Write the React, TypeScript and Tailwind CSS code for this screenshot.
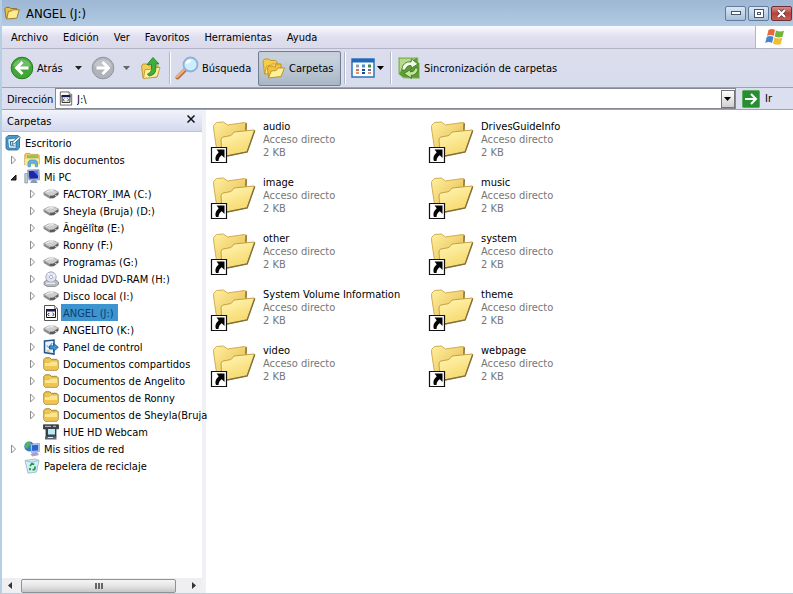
import type { ReactNode } from "react";

type IconProps = { className?: string };

function FolderIcon({ className = "h-4 w-4" }: IconProps) {
  return (
    <svg className={className} viewBox="0 0 16 16" aria-hidden="true">
      <path d="M.8 12.500V3.500L2.500 1.800h4.300L8.300 3.300h5.400l1.500 1.500v7.900l-1.200 1.500H2.200z" fill="#f0c64c" stroke="#9c7a25" strokeWidth=".9" />
      <path d="M1.700 5.800h4.500l1.500-1.300h5.500l1.200 1.200v7.500H1.700z" fill="#fce68c" />
      <path d="M1.700 10h12.700v3.200H1.700z" fill="#f0c44e" />
      <path d="M1.500 6.300h5l1.400-1.400h6" fill="none" stroke="#c79f3d" strokeWidth=".7" />
    </svg>
  );
}

function OpenFolderIcon({ className = "h-5 w-5" }: IconProps) {
  return (
    <svg className={className} viewBox="0 0 20 18" aria-hidden="true">
      <path d="M2.500 15.500 1 4l1.500-2h4.700L8.500 3.500H16V7l-3 9z" fill="#eebf45" stroke="#806021" strokeWidth="1" />
      <path d="m3.500 16.500 2-9.500 4-.5L11 5h8l-3 10.500z" fill="#fdeb90" stroke="#8d6b20" strokeWidth="1" />
    </svg>
  );
}

function FoldersIcon() {
  return (
    <svg className="h-6 w-6" viewBox="0 0 24 24" aria-hidden="true">
      <path d="M2.500 18 1 5l1.500-2H7l1.500 1.500h5L15 6v9z" fill="#f6cd48" stroke="#c09128" strokeWidth=".9" />
      <path d="m2.800 18 1.700-8 3.500-.5L9.500 8H16l-2 9z" fill="#fde67c" stroke="#c09128" strokeWidth=".8" />
      <path d="M6.500 21.500 5.500 12 7 10h4.500L13 11.500l1-3.500h5v4l-2 8z" fill="#f3c23e" stroke="#b98a22" strokeWidth=".9" />
      <path d="m6.500 22 2.700-7 5-.5 1.800-2.500h6.500L19 20.500z" fill="#fff09a" stroke="#b98a22" strokeWidth=".9" />
    </svg>
  );
}

function ShortcutFolderIcon() {
  return (
    <svg className="h-12 w-12 shrink-0" viewBox="0 0 48 48" aria-hidden="true">
      <defs>
        <linearGradient id="folderBack" x1="0" y1="0" x2="1" y2="1">
          <stop offset="0" stopColor="#fff0a0" />
          <stop offset="1" stopColor="#e3b544" />
        </linearGradient>
        <linearGradient id="folderFront" x1="0" y1="0" x2=".5" y2="1">
          <stop offset="0" stopColor="#fff8ba" />
          <stop offset="1" stopColor="#f7d86c" />
        </linearGradient>
      </defs>
      <path d="M7 36 3.500 12q-.3-3 1.500-4l1.500-1.500 7-.5 4 3 17-2.500q1.500 0 1.500 1.500l-1 26-20 4z" fill="url(#folderBack)" stroke="#d3ad50" strokeWidth="1" />
      <path d="m35.500 6.500 1.500 1-.3 8.500H35z" fill="#8f7a44" />
      <path d="m12 39-1-15q0-2.500 2-3l8-1.500 3-3.500L44 14q1 0 .5 1.500L37 36 17 40z" fill="url(#folderFront)" stroke="#c8a040" strokeWidth="1" />
      <path d="M44.700 14.500 37.200 36 17 40" fill="none" stroke="#80703e" strokeWidth="1.400" />
      <path d="M1.500 31.500h15v15h-15z" fill="#fff" stroke="#111" strokeWidth="1.200" />
      <path d="M6.500 33.500h8V42l-2.700-2.700Q8.800 41 8.500 45H6q-2-4 2.700-8.700z" fill="#050505" />
    </svg>
  );
}

function DriveIcon() {
  return (
    <svg className="h-4 w-4" viewBox="0 0 16 16" aria-hidden="true">
      <path d="m.5 6.500 5-2.500h6l4 2-5 3.500-4 .5z" fill="#cdcdcd" stroke="#969696" strokeWidth=".6" />
      <path d="m.5 6.500 6 3.500v2.500L.7 9z" fill="#8b8b8b" />
      <path d="m6.500 10 4.100-.5 4.900-3.500v2.700l-4.700 3.600-4.300.2z" fill="#5c5c5c" />
      <path d="m3.500 6 3-1.200h4" stroke="#f8f8f8" fill="none" />
      <path d="M12 9.600h1.600" stroke="#d7e4d0" />
    </svg>
  );
}

function DvdIcon() {
  return (
    <svg className="h-4 w-4" viewBox="0 0 16 16" aria-hidden="true">
      <path d="m1 11 3-2h9l2.500 2v2.500L12 15.500H4L1 13.500z" fill="#b9bbc0" stroke="#74767c" strokeWidth=".7" />
      <circle cx="8" cy="6" r="5.200" fill="#dfe4f2" stroke="#8a90a3" strokeWidth=".7" />
      <path d="M8 6 5 2M8 6l4.500-2" stroke="#fff" />
      <circle cx="8" cy="6" r="1.600" fill="#fff" stroke="#8c8fb0" strokeWidth=".7" />
      <path d="M3 12.200h9" stroke="#fff" />
    </svg>
  );
}

function ProgramIcon({ className = "h-4 w-4" }: IconProps) {
  return (
    <svg className={className} viewBox="0 0 16 16" aria-hidden="true">
      <path d="M1.500.5h10l3 3v12h-13z" fill="#fff" stroke="#555" />
      <path d="M11.500.5v3h3" fill="#ddd" stroke="#555" strokeWidth=".7" />
      <path d="M3.500 4.500h9v8h-9z" fill="#f4f4f4" stroke="#111" />
      <path d="M3 4h10v2.500H3z" fill="#171b52" />
      <path d="m6.200 8-1.400 1.400L6.200 11M9.600 8 11 9.400 9.600 11" fill="none" stroke="#222" />
    </svg>
  );
}

function DesktopIcon() {
  return (
    <svg className="h-4 w-4" viewBox="0 0 16 16" aria-hidden="true">
      <path d="m1 2.500 2-2h10l1.500 1.500v10.500l-2 2.500H3L1 13.500z" fill="#4a9bca" stroke="#1f6292" strokeWidth=".8" />
      <path d="M2.800 4 11 3v10.500l-7.500-.6z" fill="#e4f4fc" stroke="#1f6292" strokeWidth=".7" />
      <path d="M5.500 10.500v-4h4M5.500 10.500l4 .3" fill="none" stroke="#2a7fb5" strokeWidth="1.200" />
      <path d="m7 9.500 1-3 6-5 1.500 1.300L9.500 8.500z" fill="#fff" stroke="#255f87" strokeWidth=".8" />
    </svg>
  );
}

function MyDocumentsIcon() {
  return (
    <svg className="h-4 w-4" viewBox="0 0 16 16" aria-hidden="true">
      <path d="M.8 13V2.500L2 1.400h4l1 1h7.200l1 1V12z" fill="#f0ce66" stroke="#b79a48" strokeWidth=".8" />
      <path d="M3 3.200h11v3.400H3z" fill="#96bf55" />
      <path d="M1 6.500h14v6.800H1z" fill="#fbe99a" />
      <path d="M4 14.800V10l2-2h5.500l2 2v4.800h-2.200v-3.600H6.400v3.600z" fill="#65b5e3" stroke="#3785b7" strokeWidth=".6" />
    </svg>
  );
}

function ComputerIcon() {
  return (
    <svg className="h-4 w-4" viewBox="0 0 16 16" aria-hidden="true">
      <path d="M.8 4.500h2.700v9.500H.8z" fill="#c2cbd6" stroke="#8390a5" strokeWidth=".7" />
      <path d="M3.500 1 15 .800l.5 10L5 11z" fill="#b9c8de" stroke="#75849d" strokeWidth=".7" />
      <path d="m4.700 2 9.300-.2.2 7.700-8.800.3z" fill="#1c29a8" />
      <path d="m9.500 2 4.500-.2.2 5.500z" fill="#587cf0" />
      <path d="M8 11h4l1.800 3H6z" fill="#8d9bb2" />
    </svg>
  );
}

function ControlPanelIcon() {
  return (
    <svg className="h-4 w-4" viewBox="0 0 16 16" aria-hidden="true">
      <path d="M1.500 2 11 1v14l-9.500-1.500z" fill="#e7f2fc" stroke="#23578e" strokeWidth="1.500" />
      <path d="m4 6.500 1.700 2L9 4.200" fill="none" stroke="#3a78b4" />
      <path d="M6.500 10V7l4-.3V4.300L15.300 8.300l-4.800 4.200V10z" fill="#3e91d3" stroke="#194e86" strokeWidth=".8" />
      <path d="M3.500 12h3" stroke="#e09a3a" />
    </svg>
  );
}

function WebcamIcon() {
  return (
    <svg className="h-4 w-4" viewBox="0 0 16 16" aria-hidden="true">
      <path d="M.5.800h15v4H13V13H3V5H.5z" fill="#3e434b" stroke="#23272d" strokeWidth=".7" />
      <path d="M5 5h7v5.500H5z" fill="#b9eaf4" />
      <path d="M2 2.300h6M10 2.300h3" stroke="#c5ced9" />
      <path d="M2 12.500h11.500v3H2z" fill="#5b6879" />
      <path d="M5 13.500h5" stroke="#dce4ee" />
    </svg>
  );
}

function NetworkIcon() {
  return (
    <svg className="h-4 w-4" viewBox="0 0 16 16" aria-hidden="true">
      <circle cx="5.300" cy="5.500" r="5" fill="#2c80c9" />
      <path d="M2 2q3-2.500 5 0L5 5 3 8 .6 6z" fill="#52b45e" />
      <path d="m6.500 3.200 8.800-.7v8l-8 .8z" fill="#c8dcf5" stroke="#6786b7" strokeWidth=".7" />
      <path d="m7.700 4.300 6.500-.6v5.700l-6 .6z" fill="#2b63d4" />
      <path d="m9 11.500 4-.5 2 3-6.500 1.500-2-2z" fill="#a89fce" />
    </svg>
  );
}

function RecycleBinIcon() {
  return (
    <svg className="h-4 w-4" viewBox="0 0 16 16" aria-hidden="true">
      <path d="M1 2.500 11 1l4 1.500L12.500 14 4 15.200z" fill="#d5eef5" stroke="#86b8c8" strokeWidth=".8" />
      <path d="m1 2.500 6 1.700L15 2.500" fill="none" stroke="#9ac3cf" />
      <path d="M6 8 8 5.500l2.200 1M11.300 8.400l-.8 3-2 .4M5.700 10l.5 2.300" fill="none" stroke="#1f9a43" strokeWidth="1.800" />
    </svg>
  );
}

function RoundArrow({ back = false }: { back?: boolean }) {
  const fill = back ? "#43a638" : "#b1b3bb";
  const edge = back ? "#247d21" : "#9295a0";
  return (
    <svg className="h-6 w-6" viewBox="0 0 24 24" aria-hidden="true">
      <circle cx="12" cy="12" r="10.800" fill={fill} stroke={edge} />
      <path d="M3 10a9.200 8.600 0 0 1 18 0Q12 14 3 10z" fill="#fff" opacity=".24" />
      <path
        d={back ? "M18.500 12H7M12.500 6 6.500 12l6 6" : "M5.500 12H17M11.500 6l6 6-6 6"}
        fill="none" stroke="#fff" strokeWidth="2.800"
      />
    </svg>
  );
}

function UpFolderIcon() {
  return (
    <svg className="h-6 w-6" viewBox="0 0 24 24" aria-hidden="true">
      <path d="M4 22 2.500 10l1.500-2h4l2 2h9l1 2-2 9z" fill="#f4cf55" stroke="#c09a3a" />
      <path d="m4.500 22.500 1.500-9h5l2-2h8l-3 9.500z" fill="#fff09a" stroke="#b98f2e" strokeWidth=".8" />
      <path d="M8.500 18q4-1 4-5V8.500H8L14 1.500l6 6.500h-3.200v5q0 6-6.800 7z" fill="#3daf3b" stroke="#1d7b25" strokeWidth=".8" />
    </svg>
  );
}

function SearchIcon() {
  return (
    <svg className="h-6 w-6" viewBox="0 0 24 24" aria-hidden="true">
      <path d="m10 14-7.500 7.500" stroke="#b5734c" strokeWidth="4" strokeLinecap="round" />
      <path d="m9.500 13.500-7.500 7.500" stroke="#f1b581" strokeWidth="1.800" strokeLinecap="round" />
      <circle cx="15.500" cy="8.500" r="7" fill="#cfecfb" stroke="#8bb2d8" strokeWidth="1.800" />
      <path d="M10.500 8a5 5 0 0 1 6-4.500q-1 4-6 4.500z" fill="#fff" />
    </svg>
  );
}

function ViewsIcon() {
  return (
    <svg className="h-5 w-6" viewBox="0 0 24 20" aria-hidden="true">
      <path d="M1 1h22v18H1z" fill="#fff" stroke="#2b73bb" strokeWidth="1.500" />
      <path d="M1 1h22v3.500H1z" fill="#2369b9" />
      <path d="M5 6.500h3v3H5z" fill="#8fa2b5" />
      <path d="M11 6.500h3v3h-3z" fill="#4a8ec4" />
      <path d="M17 6.500h3v3h-3z" fill="#3f8a55" />
      <path d="M5 11h3v2H5z" fill="#cc6f52" />
      <path d="M11 11h3v2h-3zM11 14h3v2h-3z" fill="#17489a" />
      <path d="M17 11h3v2h-3z" fill="#5a6fa0" />
      <path d="M5 14h3v2H5zM17 14h3v2h-3z" fill="#dc9573" />
    </svg>
  );
}

function SyncIcon() {
  return (
    <svg className="h-6 w-6" viewBox="0 0 24 24" aria-hidden="true">
      <path d="M1.500 1.500H21V6l1.500 1.500v15l-16-.5-5-4z" fill="#5f9e35" stroke="#a9c79a" />
      <path d="M2.500 2.500H19L7 8.500l-4.500 9z" fill="#b7d98c" />
      <path d="M5 14a7.500 7.500 0 0 1 9-8l.5-3L21 8l-6.500 4-.5-2.500q-5 0-5.500 4.500z" fill="#f4fbe8" stroke="#3c7b23" strokeWidth=".9" />
      <path d="M21 12a7 7 0 0 1-7 7.500l.5 3L7 17.500l6.500-4v2.500q4 0 4.500-4z" fill="#c4e2a0" stroke="#3c7b23" strokeWidth=".9" />
    </svg>
  );
}

function WindowsFlag() {
  return (
    <svg className="h-5 w-5" viewBox="0 0 20 20" aria-hidden="true">
      <path d="M3.500 3q3-2.200 6.500 0L8.700 9Q5.500 7 2 9z" fill="#e6683b" />
      <path d="M11 3.500q4 1.800 8 .2L17.500 9.700q-4 1.700-7.800-.2z" fill="#73b441" />
      <path d="M1.700 10q3.500-2 6.800 0L7 16q-3.200-2-6.800 0z" fill="#4783d2" />
      <path d="M9.500 10.500q4 1.700 7.800.200L15.800 17q-4 1.600-7.800-.500z" fill="#f3bd32" />
    </svg>
  );
}

function Caret({ className = "" }: IconProps) {
  return (
    <svg className={`h-1 w-2 ${className}`} viewBox="0 0 8 4" aria-hidden="true">
      <path d="M0 0h7L3.500 4z" fill="currentColor" />
    </svg>
  );
}

type Node = { name: string; icon: ReactNode; level: 0 | 1 | 2; state?: "open" | "closed"; selected?: boolean };

const drive = <DriveIcon />;
const folder = <FolderIcon />;

const nodes: Node[] = [
  { name: "Escritorio", icon: <DesktopIcon />, level: 0 },
  { name: "Mis documentos", icon: <MyDocumentsIcon />, level: 1, state: "closed" },
  { name: "Mi PC", icon: <ComputerIcon />, level: 1, state: "open" },
  { name: "FACTORY_IMA (C:)", icon: drive, level: 2, state: "closed" },
  { name: "Sheyla (Bruja) (D:)", icon: drive, level: 2, state: "closed" },
  { name: "Ãngëlîtø (E:)", icon: drive, level: 2, state: "closed" },
  { name: "Ronny (F:)", icon: drive, level: 2, state: "closed" },
  { name: "Programas (G:)", icon: drive, level: 2, state: "closed" },
  { name: "Unidad DVD-RAM (H:)", icon: <DvdIcon />, level: 2, state: "closed" },
  { name: "Disco local (I:)", icon: drive, level: 2, state: "closed" },
  { name: "ANGEL (J:)", icon: <ProgramIcon />, level: 2, selected: true },
  { name: "ANGELITO (K:)", icon: drive, level: 2, state: "closed" },
  { name: "Panel de control", icon: <ControlPanelIcon />, level: 2, state: "closed" },
  { name: "Documentos compartidos", icon: folder, level: 2, state: "closed" },
  { name: "Documentos de Angelito", icon: folder, level: 2, state: "closed" },
  { name: "Documentos de Ronny", icon: folder, level: 2, state: "closed" },
  { name: "Documentos de Sheyla(Bruja", icon: folder, level: 2, state: "closed" },
  { name: "HUE HD Webcam", icon: <WebcamIcon />, level: 2 },
  { name: "Mis sitios de red", icon: <NetworkIcon />, level: 1, state: "closed" },
  { name: "Papelera de reciclaje", icon: <RecycleBinIcon />, level: 1 },
];

const indent = ["pl-[3px]", "pl-[6px]", "pl-[25px]"];

function TreeRow({ node }: { node: Node }) {
  return (
    <li
      role="treeitem"
      aria-level={node.level + 1}
      aria-selected={!!node.selected}
      className={`flex h-[17px] items-center whitespace-nowrap ${indent[node.level]}`}
    >
      {node.level > 0 && (
        <span className="flex w-4 shrink-0 items-center">
          {node.state && (
            <button type="button" aria-label={`${node.state === "open" ? "Contraer" : "Expandir"} ${node.name}`}>
              <svg className="h-[10px] w-[10px]" viewBox="0 0 10 10" aria-hidden="true">
                {node.state === "open" ? (
                  <path d="M8 3v5H3z" fill="#333" stroke="#111" />
                ) : (
                  <path d="M3.500 1v8l4-4z" fill="#fff" stroke="#8c8c8c" />
                )}
              </svg>
            </button>
          )}
        </span>
      )}
      <span className="shrink-0">{node.icon}</span>
      <button
        type="button"
        className={`ml-[2px] h-[17px] px-[2px] pt-[2px] ${node.selected ? "bg-[#3d94cf] pr-1 text-[#0b3f70]" : ""}`}
      >
        {node.name}
      </button>
    </li>
  );
}

const files = [
  "audio", "DrivesGuideInfo", "image", "music", "other", "system",
  "System Volume Information", "theme", "video", "webpage",
];

const menus = ["Archivo", "Edición", "Ver", "Favoritos", "Herramientas", "Ayuda"];

function Divider() {
  return <div className="h-8 w-[2px] shrink-0 border-l border-[#b3b6c9] bg-white" />;
}

export default function App() {
  return (
    <div className="flex h-screen flex-col overflow-hidden border-b border-l-2 border-[#b5cfe3] bg-white font-['Tahoma','DejaVu_Sans_Condensed','DejaVu_Sans',sans-serif] text-[11px] leading-[13px] text-black">
      <header className="flex h-[26px] shrink-0 items-center bg-linear-to-b from-[#9db7d4] to-[#b2cae3] pl-[2px]">
        <OpenFolderIcon className="h-4 w-4" />
        <h1 className="ml-[6px] flex-1 text-[13px]">ANGEL (J:)</h1>
        <div className="flex gap-[2px] pr-px">
          <button type="button" aria-label="Minimizar" className="flex h-[15px] w-[21px] items-center justify-center rounded-xs border border-[#637b98] bg-linear-to-b from-[#dce8f3] to-[#a8c0d9]">
            <span className="h-1 w-[10px] border border-[#46566c] bg-white" />
          </button>
          <button type="button" aria-label="Maximizar" className="flex h-[15px] w-[21px] items-center justify-center rounded-xs border border-[#637b98] bg-linear-to-b from-[#dce8f3] to-[#a8c0d9]">
            <span className="flex h-[9px] w-[10px] items-center justify-center border border-[#46566c] bg-white">
              <span className="h-[3px] w-1 border border-[#46566c]" />
            </span>
          </button>
          <button type="button" aria-label="Cerrar" className="flex h-[15px] w-[21px] items-center justify-center rounded-xs border border-[#69303a] bg-linear-to-b from-[#d98c87] via-[#b84138] to-[#c65d50]">
            <svg className="h-[9px] w-[11px]" viewBox="0 0 11 9" aria-hidden="true">
              <path d="m2 1 7 7M9 1 2 8" stroke="#61333a" strokeWidth="3.600" />
              <path d="m2 1 7 7M9 1 2 8" stroke="#fff" strokeWidth="2.200" />
            </svg>
          </button>
        </div>
      </header>

      <nav className="flex h-[23px] shrink-0 border-b border-[#b4b5c9] bg-linear-to-b from-[#fafaff] via-[#dfdff0] to-[#dadaeb]" aria-label="Menú">
        <div className="flex flex-1 items-center gap-[15px] pl-[9px]">
          {menus.map((menu) => (
            <button key={menu} type="button">{menu}</button>
          ))}
        </div>
        <div className="flex w-[38px] items-center justify-center border-l border-[#b4b5c9] bg-white">
          <WindowsFlag />
        </div>
      </nav>

      <div className="flex h-[39px] shrink-0 items-center border-b border-[#9ea1ae] bg-linear-to-b from-[#dcddec] to-[#d7dced] pl-2" role="toolbar" aria-label="Botones estándar">
        <button type="button" className="flex w-[58px] shrink-0 items-center gap-[3px]"><RoundArrow back />Atrás</button>
        <button type="button" aria-label="Historial de atrás" className="flex w-[22px] shrink-0 justify-center"><Caret className="text-[#222]" /></button>
        <button type="button" aria-label="Adelante" className="ml-px shrink-0"><RoundArrow /></button>
        <button type="button" aria-label="Historial de adelante" className="flex w-6 shrink-0 justify-center"><Caret className="text-[#666]" /></button>
        <button type="button" aria-label="Arriba" className="mr-[6px] shrink-0"><UpFolderIcon /></button>
        <Divider />
        <button type="button" className="ml-1 flex w-[83px] shrink-0 items-center gap-[3px]"><SearchIcon />Búsqueda</button>
        <button type="button" aria-pressed="true" className="flex h-[35px] w-[83px] shrink-0 items-center gap-[3px] rounded-xs border border-[#717f90] bg-linear-to-b from-[#ced7e1] via-[#bcc8d4] to-[#a9b7c6] pl-[3px] shadow-inner">
          <FoldersIcon />Carpetas
        </button>
        <div className="ml-[3px]"><Divider /></div>
        <button type="button" aria-label="Vistas" className="ml-[5px] mr-[5px] flex shrink-0 items-center gap-[2px]"><ViewsIcon /><Caret /></button>
        <Divider />
        <button type="button" className="ml-[5px] flex shrink-0 items-center gap-[3px]"><SyncIcon />Sincronización de carpetas</button>
      </div>

      <form className="flex h-[22px] shrink-0 items-center border-b border-[#9ea1ae] bg-[#dcdfef]" onSubmit={(event) => event.preventDefault()}>
        <label htmlFor="address" className="w-[53px] shrink-0 pl-[5px] pt-[2px]">Dirección</label>
        <div className="flex h-[21px] flex-1 items-center border border-[#868993] bg-white pl-[3px]">
          <ProgramIcon className="h-[15px] w-[14px]" />
          <input id="address" defaultValue="J:\" className="ml-1 min-w-0 flex-1 pt-[2px] outline-none" />
          <button type="button" aria-label="Mostrar direcciones" className="flex h-[18px] w-[14px] items-center justify-center border border-[#777] bg-linear-to-b from-white to-[#d0d0d0]"><Caret /></button>
        </div>
        <button type="submit" className="ml-[6px] flex w-[51px] items-center gap-[5px]">
          <svg className="h-[18px] w-[18px]" viewBox="0 0 18 18" aria-hidden="true">
            <rect x=".5" y=".5" width="17" height="17" rx="1" fill="#278e34" stroke="#5aac5c" />
            <path d="M3 9h11M9 4l5 5-5 5" stroke="#fff" strokeWidth="2" fill="none" />
          </svg>
          Ir
        </button>
      </form>

      <div className="flex min-h-0 flex-1">
        <aside className="relative z-10 flex w-[200px] shrink-0 flex-col">
          <div className="flex h-[22px] shrink-0 items-center justify-between border-b border-[#bdc3d8] bg-linear-to-b from-[#f1f3fb] to-[#d4d9ee] pl-[5px] pr-[7px]">
            <h2 className="pt-[2px]">Carpetas</h2>
            <button type="button" aria-label="Cerrar panel" className="pb-1">
              <svg className="h-2 w-2" viewBox="0 0 8 8" aria-hidden="true"><path d="m.500.500 7 7m0-7-7 7" stroke="#111" strokeWidth="1.500" /></svg>
            </button>
          </div>
          <ul role="tree" aria-label="Carpetas" className="min-h-0 flex-1 pt-[2px]">
            {nodes.map((node) => <TreeRow key={node.name} node={node} />)}
          </ul>
          <div className="flex h-[15px] shrink-0 items-center bg-[#efeff1]">
            <button type="button" aria-label="Desplazar a la izquierda" className="flex w-[19px] pl-[6px]">
              <svg className="h-[7px] w-1" viewBox="0 0 4 7" aria-hidden="true"><path d="M4 0v7L0 3.500z" fill="#333" /></svg>
            </button>
            <div className="flex h-[14px] w-[155px] items-center justify-center gap-px rounded-xs border border-[#929292] bg-linear-to-b from-[#f5f5f5] via-[#e5e5e5] to-[#c7c7c9]">
              <span className="h-[6px] w-[2px] bg-[#666]" /><span className="h-[6px] w-[2px] bg-[#666]" /><span className="h-[6px] w-[2px] bg-[#666]" />
            </div>
            <button type="button" aria-label="Desplazar a la derecha" className="ml-auto flex w-4 justify-center">
              <svg className="h-[7px] w-1" viewBox="0 0 4 7" aria-hidden="true"><path d="M0 0v7l4-3.500z" fill="#333" /></svg>
            </button>
          </div>
        </aside>
        <div className="w-1 shrink-0 bg-[#f0f1f4]" />
        <main className="min-w-0 flex-1 overflow-hidden bg-white pl-1 pt-[6px]">
          <ul className="grid grid-cols-[repeat(auto-fill,218px)]">
            {files.map((name) => (
              <li key={name} className="h-14">
                <button type="button" className="flex gap-[5px] text-left">
                  <ShortcutFolderIcon />
                  <span className="whitespace-nowrap pt-1">
                    <span className="block">{name}</span>
                    <span className="block text-[#777]">Acceso directo</span>
                    <span className="block text-[#777]">2 KB</span>
                  </span>
                </button>
              </li>
            ))}
          </ul>
        </main>
      </div>
    </div>
  );
}
